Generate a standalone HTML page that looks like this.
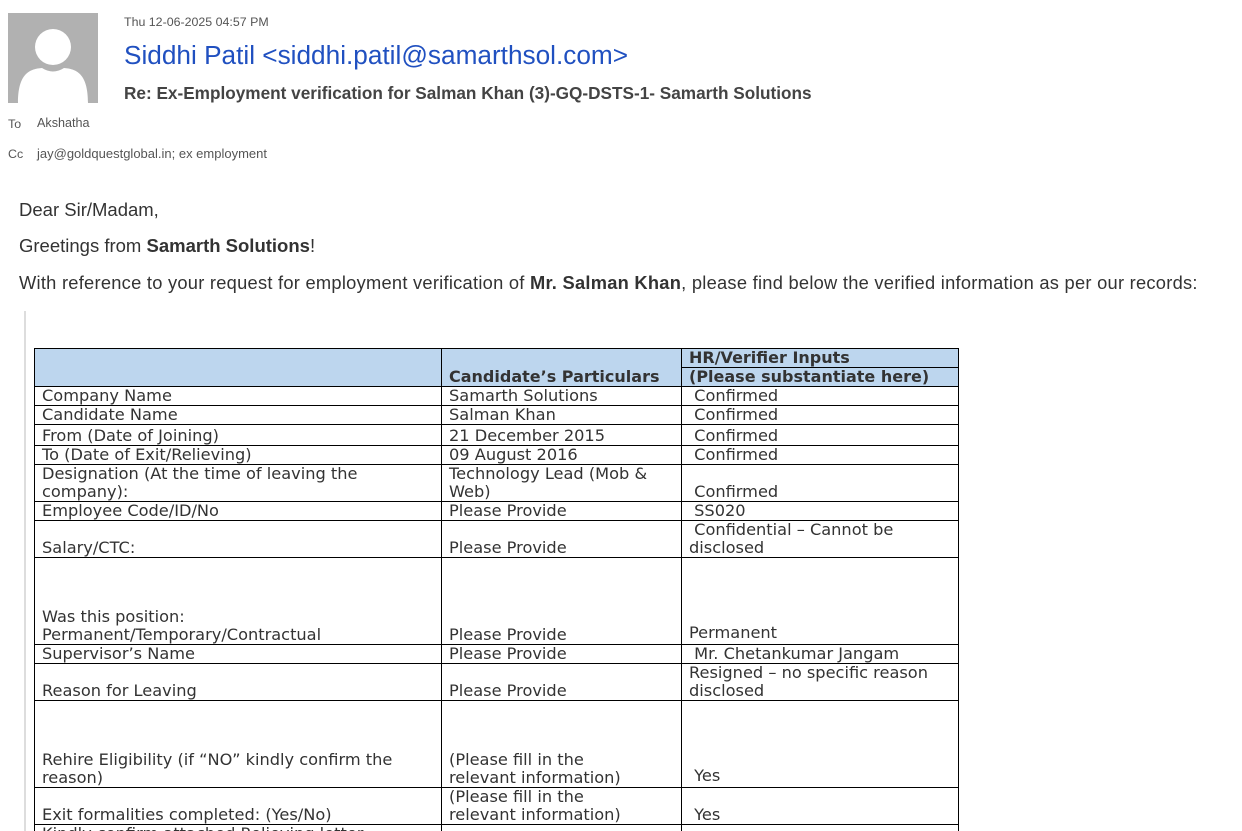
<!DOCTYPE html>
<html><head><meta charset="utf-8"><style>
*{margin:0;padding:0;box-sizing:border-box}
html,body{width:1242px;height:831px;overflow:hidden}
body{background:#fff;position:relative;font-family:"Liberation Sans",sans-serif;color:#333}
.abs{position:absolute;white-space:nowrap}
.avatar{left:8px;top:13px;width:90px;height:90px;background:#b1b1b1;overflow:hidden}
.body{font-size:18.5px;color:#333}
table{position:absolute;left:34px;top:348px;border-collapse:collapse;table-layout:fixed;font-family:"DejaVu Sans",Verdana,sans-serif;font-size:16.2px;color:#333}
td{border:1px solid #000;vertical-align:bottom;padding:0 0 0 7px;line-height:18px;overflow:hidden;white-space:nowrap}
th{background:#bdd6ee;border:1px solid #000;vertical-align:bottom;text-align:left;padding:0 0 0 7px;line-height:18px;font-size:16px;color:#333;white-space:nowrap}
</style></head><body>
<div class="abs avatar"><svg width="90" height="90" viewBox="0 0 90 90"><circle cx="45" cy="34" r="18" fill="#fff"/><path d="M10 90 C10 60 22 56 34 55 Q45 62 56 55 C68 56 80 60 80 90 Z" fill="#fff"/></svg></div>
<div class="abs" style="left:124px;top:15px;font-size:12.4px;color:#555">Thu 12-06-2025 04:57 PM</div>
<div class="abs" style="left:124px;top:40px;font-size:26.2px;color:#2050c0">Siddhi Patil &lt;siddhi.patil@samarthsol.com&gt;</div>
<div class="abs" style="left:124px;top:83px;font-size:17.2px;font-weight:bold;color:#444">Re: Ex-Employment verification for Salman Khan (3)-GQ-DSTS-1- Samarth Solutions</div>
<div class="abs" style="left:8px;top:117px;font-size:12.4px;color:#555">To</div>
<div class="abs" style="left:37px;top:116px;font-size:12.6px;color:#555">Akshatha</div>
<div class="abs" style="left:8px;top:147px;font-size:12.4px;color:#555">Cc</div>
<div class="abs" style="left:37px;top:146px;font-size:13px;color:#555">jay@goldquestglobal.in; ex employment</div>
<div class="abs body" style="left:19px;top:199px">Dear Sir/Madam,</div>
<div class="abs body" style="left:19px;top:235px">Greetings from <b>Samarth Solutions</b>!</div>
<div class="abs body" style="left:19px;top:272px;font-size:18.3px;letter-spacing:0.26px">With reference to your request for employment verification of <b>Mr. Salman Khan</b>, please find below the verified information as per our records:</div>
<div class="abs" style="left:24px;top:311px;width:2px;height:520px;background:#ddd"></div>
<table>
<colgroup><col style="width:407px"><col style="width:240px"><col style="width:277px"></colgroup>
<tr style="height:19px"><th rowspan="2"></th><th rowspan="2">Candidate’s Particulars</th><th>HR/Verifier Inputs</th></tr>
<tr style="height:19px"><th>(Please substantiate here)</th></tr>
<tr style="height:19px"><td>Company Name</td><td>Samarth Solutions</td><td>&nbsp;Confirmed</td></tr>
<tr style="height:19px"><td>Candidate Name</td><td>Salman Khan</td><td>&nbsp;Confirmed</td></tr>
<tr style="height:21px"><td>From (Date of Joining)</td><td>21 December 2015</td><td>&nbsp;Confirmed</td></tr>
<tr style="height:19px"><td>To (Date of Exit/Relieving)</td><td>09 August 2016</td><td>&nbsp;Confirmed</td></tr>
<tr style="height:37px"><td>Designation (At the time of leaving the<br>company):</td><td>Technology Lead (Mob &amp;<br>Web)</td><td>&nbsp;Confirmed</td></tr>
<tr style="height:19px"><td>Employee Code/ID/No</td><td>Please Provide</td><td>&nbsp;SS020</td></tr>
<tr style="height:37px"><td>Salary/CTC:</td><td>Please Provide</td><td>&nbsp;Confidential – Cannot be<br>disclosed</td></tr>
<tr style="height:87px"><td>Was this position:<br>Permanent/Temporary/Contractual</td><td>Please Provide</td><td style="padding-bottom:2px">Permanent</td></tr>
<tr style="height:19px"><td>Supervisor’s Name</td><td>Please Provide</td><td>&nbsp;Mr. Chetankumar Jangam</td></tr>
<tr style="height:37px"><td>Reason for Leaving</td><td>Please Provide</td><td>Resigned – no specific reason<br>disclosed</td></tr>
<tr style="height:87px"><td>Rehire Eligibility (if “NO” kindly confirm the<br>reason)</td><td>(Please fill in the<br>relevant information)</td><td style="padding-bottom:2px">&nbsp;Yes</td></tr>
<tr style="height:37px"><td>Exit formalities completed: (Yes/No)</td><td>(Please fill in the<br>relevant information)</td><td>&nbsp;Yes</td></tr>
<tr style="height:37px"><td style="vertical-align:top">Kindly confirm attached Relieving letter</td><td></td><td></td></tr>
</table>
</body></html>
